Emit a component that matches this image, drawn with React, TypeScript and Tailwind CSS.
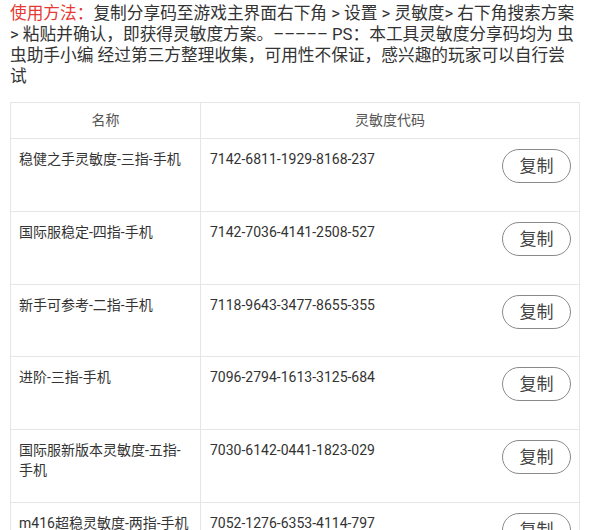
type Preset = {
  name: string;
  code: string;
};

const presets: Preset[] = [
  { name: "稳健之手灵敏度-三指-手机", code: "7142-6811-1929-8168-237" },
  { name: "国际服稳定-四指-手机", code: "7142-7036-4141-2508-527" },
  { name: "新手可参考-二指-手机", code: "7118-9643-3477-8655-355" },
  { name: "进阶-三指-手机", code: "7096-2794-1613-3125-684" },
  { name: "国际服新版本灵敏度-五指-手机", code: "7030-6142-0441-1823-029" },
  { name: "m416超稳灵敏度-两指-手机", code: "7052-1276-6353-4114-797" },
];

// 说明文字按截图逐行断开
const guideLines = [
  "复制分享码至游戏主界面右下角 > 设置 > 灵敏度> 右下角搜索方案",
  "> 粘贴并确认，即获得灵敏度方案。––––– PS：本工具灵敏度分享码均为 虫",
  "虫助手小编 经过第三方整理收集，可用性不保证，感兴趣的玩家可以自行尝",
  "试",
];

export default function App() {
  return (
    <div className="h-[530px] w-[600px] overflow-hidden bg-white font-['Roboto','Noto_Sans_CJK_SC',sans-serif] text-[#333]">
      <div className="px-[10px] pt-[3px] text-[16.7px] leading-[21px] whitespace-nowrap">
        {guideLines.map((line, i) => (
          <div key={i}>
            {i === 0 ? <span className="text-[#e53935]">使用方法：</span> : null}
            {line}
          </div>
        ))}
      </div>

      <div className="mt-[15px] ml-[10px] w-[570px] border border-[#e6e6e6]">
        <div className="flex h-[36px] border-b border-[#e6e6e6] text-[14px] text-[#555]">
          <div className="flex w-[190px] items-center justify-center border-r border-[#e6e6e6]">名称</div>
          <div className="flex flex-1 items-center justify-center">灵敏度代码</div>
        </div>

        {presets.map((p) => (
          <div key={p.code} className="flex h-[72.8px] border-b border-[#e6e6e6] text-[14px] leading-[20px]">
            <div className="w-[190px] border-r border-[#e6e6e6] pl-[8px] pr-[10px] pt-[10px]">{p.name}</div>
            <div className="flex flex-1 items-start justify-between pl-[9px] pr-[8px] pt-[10px]">
              <span>{p.code}</span>
              <button
                type="button"
                className="h-[34px] w-[69px] rounded-full border border-[#8a8a8a] text-[17px] text-[#444]"
              >
                复制
              </button>
            </div>
          </div>
        ))}
      </div>
    </div>
  );
}
